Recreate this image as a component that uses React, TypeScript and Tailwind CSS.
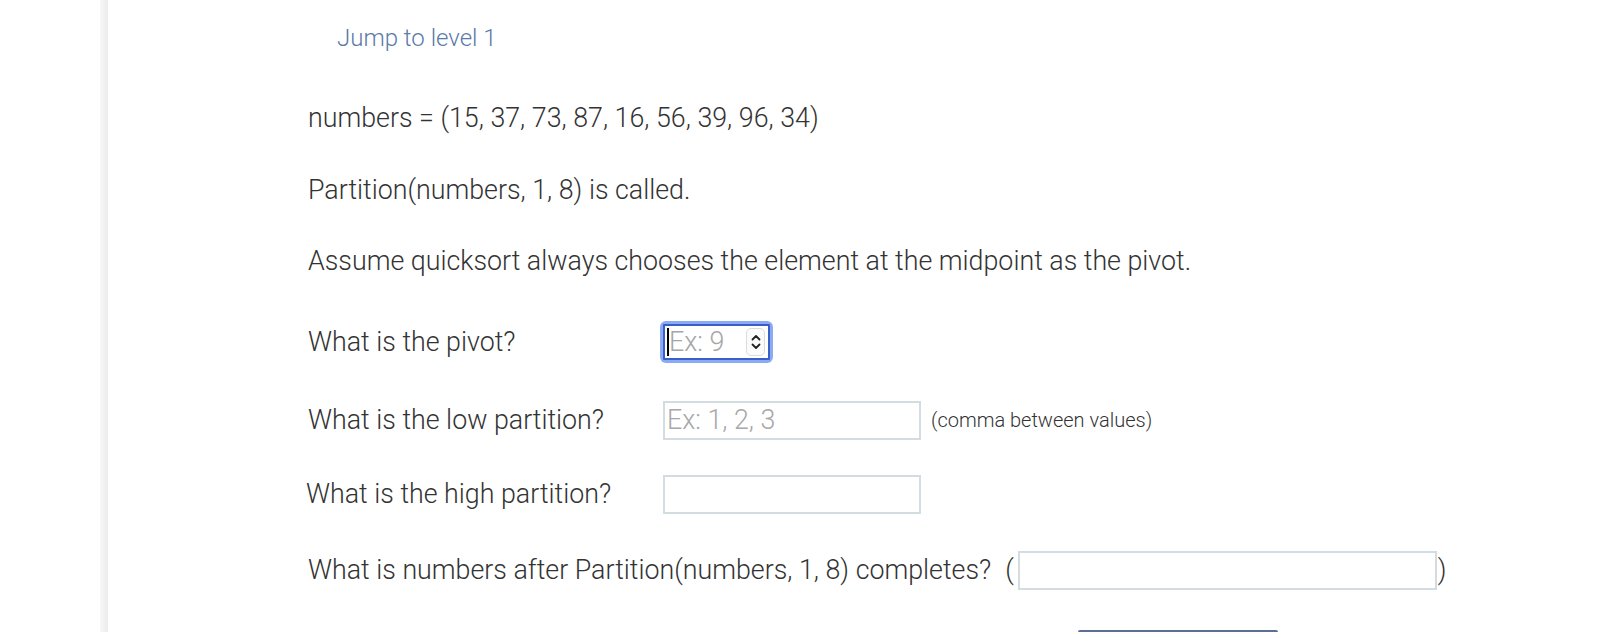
import React from "react";

const font = { fontFamily: "Roboto, 'Liberation Sans', sans-serif" };

function Spinner() {
  return (
    <div className="flex h-[28px] w-[19px] flex-col items-center justify-center rounded-[5px] border border-[#dcdcdc] bg-[#fbfbfb]">
      <svg width="12" height="24" viewBox="0 0 12 24">
        <path d="M2.5 9.5 L6 6 L9.5 9.5" fill="none" stroke="#222" strokeWidth="1.8" strokeLinecap="round" strokeLinejoin="round" />
        <path d="M2.5 14.5 L6 18 L9.5 14.5" fill="none" stroke="#222" strokeWidth="1.8" strokeLinecap="round" strokeLinejoin="round" />
      </svg>
    </div>
  );
}

export default function App() {
  return (
    <div className="flex h-[632px] w-[1601px] overflow-hidden bg-white text-[#333]" style={font}>
      <div className="w-[100px] shrink-0" />
      <div className="w-[8px] shrink-0 bg-gradient-to-r from-[#f8f8f8] to-[#ebebeb]" />
      <div className="flex flex-1 flex-col pl-[200px] text-[26.8px] font-light">
        <div className="mt-[18px] flex h-[40px] shrink-0 items-center pl-[29px] text-[24px] text-[#5a7aa8]">
          Jump to level 1
        </div>
        <div className="mt-[40px] flex h-[40px] shrink-0 items-center">
          numbers = (15, 37, 73, 87, 16, 56, 39, 96, 34)
        </div>
        <div className="mt-[32px] flex h-[40px] shrink-0 items-center">Partition(numbers, 1, 8) is called.</div>
        <div className="mt-[31px] flex h-[40px] shrink-0 items-center">
          Assume quicksort always chooses the element at the midpoint as the pivot.
        </div>
        <div className="mt-[41px] flex h-[40px] shrink-0 items-center">
          <div className="w-[352px]">What is the pivot?</div>
          <div className="flex h-[42px] w-[113px] shrink-0 items-center rounded-[6px] bg-[#8aabf3] p-[3px]">
            <div className="flex h-full w-full items-center rounded-[1px] border-2 border-[#3a60c8] bg-white pl-[2px] pr-[3px]">
              <span className="h-[28px] w-[2px] shrink-0 bg-black" />
              <input
                className="w-[62px] bg-transparent text-[26.8px] font-light text-[#333] outline-none placeholder:text-[#a6a6a6]"
                placeholder="Ex: 9"
                style={font}
              />
              <div className="ml-auto">
                <Spinner />
              </div>
            </div>
          </div>
        </div>
        <div className="mt-[38px] flex h-[40px] shrink-0 items-center">
          <div className="w-[355px]">What is the low partition?</div>
          <input
            className="h-[39px] w-[258px] border-2 border-[#d3dce0] px-[2px] text-[26.8px] font-light outline-none placeholder:text-[#a8a8a8]"
            placeholder="Ex: 1, 2, 3"
            style={font}
          />
          <span className="ml-[10px] text-[20px] font-light text-[#333]">(comma between values)</span>
        </div>
        <div className="mt-[34px] flex h-[40px] shrink-0 items-center">
          <div className="-ml-[2px] w-[357px]">What is the high partition?</div>
          <input
            className="h-[39px] w-[258px] border-2 border-[#d3dce0] px-[2px] text-[26.8px] font-light outline-none"
            style={font}
          />
        </div>
        <div className="mt-[36px] flex h-[40px] shrink-0 items-center">
          <span>What is numbers after Partition(numbers, 1, 8) completes?</span>
          <span className="ml-[14px]">(</span>
          <input
            className="ml-[4px] h-[39px] w-[419px] border-2 border-[#d3dce0] px-[2px] text-[26.8px] font-light outline-none"
            style={font}
          />
          <span className="ml-[1px]">)</span>
        </div>
        <div className="mt-[40px] ml-[770px] h-[40px] w-[200px] shrink-0 rounded-t-[2px] bg-[#5b6f94]" />
      </div>
    </div>
  );
}
